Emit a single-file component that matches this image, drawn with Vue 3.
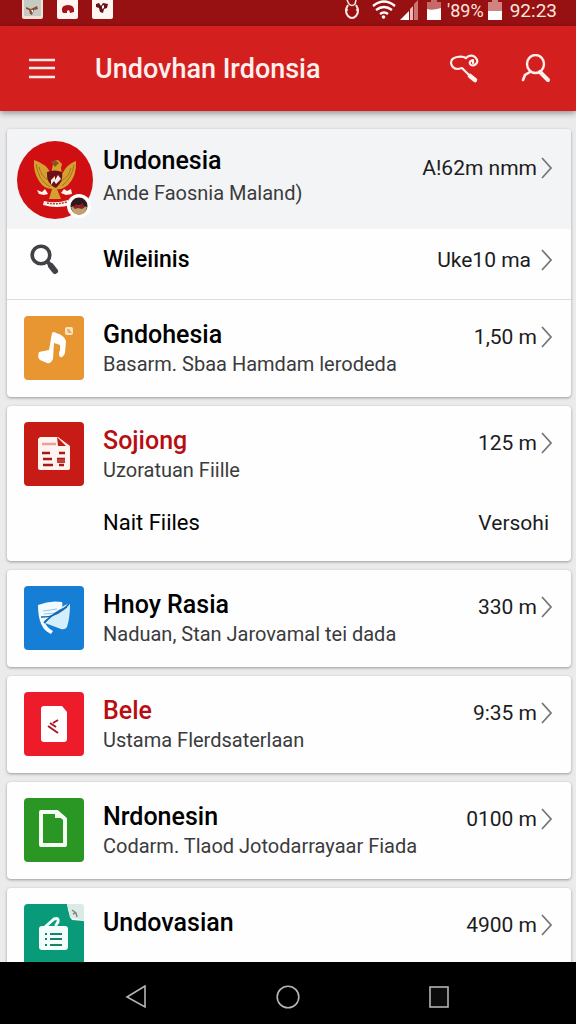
<script setup>
import { ref } from 'vue'

const selected = ref('')

// each group is one raised card in the list
const groups = [
  [
    { id: 'profile', kind: 'profile', title: 'Undonesia', sub: 'Ande Faosnia Maland)', meta: 'A!62m nmm' },
    { id: 'search', kind: 'search', title: 'Wileiinis', meta: 'Uke10 ma' },
    { id: 'music', kind: 'item', icon: 'music', title: 'Gndohesia', sub: 'Basarm. Sbaa Hamdam lerodeda', meta: '1,50 m' }
  ],
  [
    {
      id: 'news', kind: 'item', icon: 'news', title: 'Sojiong', sub: 'Uzoratuan Fiille', meta: '125 m', red: true,
      extra: { label: 'Nait Fiiles', value: 'Versohi' }
    }
  ],
  [{ id: 'shield', kind: 'item', icon: 'shield', title: 'Hnoy Rasia', sub: 'Naduan, Stan Jarovamal tei dada', meta: '330 m' }],
  [{ id: 'card', kind: 'item', icon: 'card', title: 'Bele', sub: 'Ustama Flerdsaterlaan', meta: '9:35 m', red: true }],
  [{ id: 'file', kind: 'item', icon: 'file', title: 'Nrdonesin', sub: 'Codarm. Tlaod Jotodarrayaar Fiada', meta: '0100 m' }],
  [{ id: 'notes', kind: 'item', icon: 'notes', title: 'Undovasian', sub: '', meta: '4900 m' }]
]

const select = (id) => {
  selected.value = id
}
</script>

<template>
  <div class="screen">
    <!-- STATUS BAR -->
    <div class="status">
      <div class="status-left">
        <svg class="tile" viewBox="0 0 21 19">
          <path d="M0 0h21v17q0 2-2 2H2q-2 0-2-2z" fill="#f3e2dc" />
          <path d="M2 0h17v16H2z" fill="#c5cbc2" />
          <path d="M4 7l5 2 6-3 1 3-4 1-2 5-2-1-1-4-3-1z" fill="#8d4a35" />
          <path d="M9 10l2 0 0 3z" fill="#fff" />
        </svg>
        <svg class="tile" viewBox="0 0 21 19">
          <path d="M0 0h21v17q0 2-2 2H2q-2 0-2-2z" fill="#fff6f4" />
          <path d="M5 11Q4 5 11 5q7 0 6 7l-4 1-1-3-2 1 0 2-4 0z" fill="#a5141b" />
        </svg>
        <svg class="tile" viewBox="0 0 21 19">
          <path d="M0 0h21v17q0 2-2 2H2q-2 0-2-2z" fill="#fff6f4" />
          <path d="M4 4l3-1 2 3 2-3 5 1-1 4-3 1-1 4-3-1-1-4-3-1z" fill="#66141a" />
          <path d="M10 6l2-1 0 3-2 1z" fill="#fff" />
        </svg>
      </div>
      <div class="status-right">
        <svg class="alarm" viewBox="0 0 16 20">
          <path d="M4 5Q0 11 4 16q4 4 8 0 4-5 0-11" fill="none" stroke="#ffe9e5" stroke-width="2" />
          <path d="M3 0l2 4q3 3 6 0l1-4M1 10h3M12 10h3" fill="none" stroke="#ffe9e5" stroke-width="1.500" />
        </svg>
        <svg class="wifi" viewBox="0 0 24 20">
          <path d="M1 6Q12-3 23 6M4 10q8-6 16 0M8 14q4-3 8 0" fill="none" stroke="#fff" stroke-width="2.400" />
          <circle cx="11.500" cy="17" r="1.800" fill="#fff" />
        </svg>
        <svg class="signal" viewBox="0 0 19 20">
          <path d="M0 20L9 11v9z" fill="#fff" />
          <path d="M10 9l3-3v14h-3z" fill="#e8b9b5" />
          <path d="M14 4l4-4v20h-4z" fill="#c97673" />
        </svg>
        <svg class="battery" viewBox="0 0 14 20">
          <path d="M0 2h4V0h6v2h4v8H0z" fill="#c46a68" />
          <path d="M0 9q5 2 14-1v12H0z" fill="#fff" />
        </svg>
        <span class="status-text percent">'89%</span>
        <svg class="battery" viewBox="0 0 14 20">
          <path d="M0 2h4V0h6v2h4v10H0z" fill="#d08481" />
          <path d="M0 11h14v9H0z" fill="#fff" />
        </svg>
        <span class="status-text clock">92:23</span>
      </div>
    </div>

    <!-- APP BAR -->
    <header class="appbar">
      <button class="icon-btn" aria-label="Menu">
        <svg width="26" height="22" viewBox="0 0 26 22">
          <path d="M0 2h26M0 10h26M0 19h26" stroke="#ffe9e6" stroke-width="2.600" />
        </svg>
      </button>
      <h1 class="app-title">Undovhan Irdonsia</h1>
      <button class="icon-btn" aria-label="Share">
        <svg width="30" height="30" viewBox="0 0 30 30" fill="none" stroke="#fff0ee" stroke-linecap="round" stroke-linejoin="round">
          <path d="M17 4q-3-2-9-1-6 1-6 6 1 6 7 6l4-1 8 8" stroke-width="2.200" />
          <path d="M17 4q4-4 9-1 4 4 1 7-4 3-6 0-1-3 3-4v3" stroke-width="2.200" />
          <path d="M21 22l5 4" stroke-width="4.500" />
        </svg>
      </button>
      <button class="icon-btn" aria-label="Search">
        <svg width="30" height="30" viewBox="0 0 30 30" fill="none" stroke="#fff0ee" stroke-linecap="round">
          <ellipse cx="14.500" cy="10" rx="8.500" ry="9" stroke-width="2.400" />
          <path d="M9 18l-5 3-2 5" stroke-width="2.600" />
          <path d="M19 18l8 8" stroke-width="4" />
        </svg>
      </button>
    </header>

    <!-- LIST -->
    <main class="list">
      <section v-for="(group, i) in groups" :key="i" class="card">
        <a
          v-for="row in group"
          :key="row.id"
          href="#"
          :class="['row', row.kind, { selected: selected === row.id }]"
          @click.prevent="select(row.id)"
        >
          <!-- profile emblem with its small badge -->
          <svg v-if="row.kind === 'profile'" class="avatar" viewBox="0 0 76 78">
            <ellipse cx="38" cy="39" rx="38" ry="39" fill="#d00f12" />
            <path d="M17 19q13 4 17 14l2-10 1-3 4-1 4 4-1 4 1 6q5-10 14-13 1 15-8 24-6 5-11 4l4 10H32l3-10q-8 0-13-8-6-9-5-21z" fill="#d5a030" />
            <path d="M19 23q2 16 14 23M22 26q2 10 11 14M57 24q-2 13-12 21M54 27q-2 9-10 13" fill="none" stroke="#a9711d" stroke-width="1" />
            <path d="M30 31q8-3 15 0 2 9-6 16-10-4-9-16z" fill="#6c1117" />
            <path d="M34 39l4-4v4l3-5 3 4-5 5-2-3-3 4z" fill="#f8eadf" />
            <path d="M34 21l4-2 4 3-4 4z" fill="#8a5420" />
            <path d="M20 49l5 2 3-3 3 5-4 1-5-1zM54 48l-4 2-3-2-3 4 5 2 6-1z" fill="#fff4ee" />
            <path d="M27 60q12 3 24-1l3 5q-14 4-28 0z" fill="#fff4ee" />
            <path d="M30 62q9 2 20-1" fill="none" stroke="#a8463e" stroke-width="1.500" stroke-dasharray="2 1" />
            <circle cx="62" cy="65" r="12" fill="#fff" />
            <circle cx="62" cy="65" r="8.500" fill="#30191a" />
            <path d="M54 66q8-3 16 0-1 7-8 8-7-1-8-8z" fill="#c4a06e" />
            <path d="M56 66l3-3 3 2 3-3 3 4-3 2-4-1-3 1z" fill="#8b2025" />
          </svg>

          <svg v-else-if="row.kind === 'search'" class="glass" viewBox="0 0 30 32">
            <circle cx="11" cy="11" r="8.800" fill="none" stroke="#404246" stroke-width="3.600" />
            <path d="M17 17l4 5" stroke="#404246" stroke-width="4" />
            <path d="M21 22l4 5" stroke="#404246" stroke-width="6" stroke-linecap="round" />
          </svg>

          <svg v-else class="icon" viewBox="0 0 60 64">
            <g v-if="row.icon === 'music'">
              <rect width="60" height="64" rx="4" fill="#e79631" />
              <path d="M28 17q2-2 4 0 8 2 10 8l-1 12q-2 5-5 4-2-3 0-7l0-5-6-2-1 16q-2 5-6 4l-7-3q-3-3-1-8l5-1 5-1z" fill="#fff" />
              <rect x="41" y="11" width="8" height="8" rx="2" fill="#fbe3bf" />
              <path d="M43 13h2l3 4h-4z" fill="#e8ad62" />
            </g>
            <g v-else-if="row.icon === 'news'">
              <rect width="60" height="64" rx="4" fill="#c71c16" />
              <path d="M16 15h18l12 9v22q0 2-3 2H17q-3 0-3-2V17z" fill="#fff3f0" />
              <path d="M33 15l1 9h8z" fill="#c71c16" />
              <path d="M18 22h14" stroke="#e2a39c" stroke-width="2.500" />
              <path d="M18 31h8M19 37h9M19 43h10M33 37h8M35 31h6M35 43h5" stroke="#a51a17" stroke-width="2.500" />
              <path d="M33 37h8v4h-8z" fill="#c2403a" />
            </g>
            <g v-else-if="row.icon === 'shield'">
              <rect width="60" height="64" rx="4" fill="#167fd5" />
              <path d="M14 19q12-5 24-3 2 5-3 9L20 35q3 7 9 10l-2 3Q14 43 14 19z" fill="#f2fbff" />
              <path d="M37 22q4-4 9-4 0 14-3 23-2 3-6 2L21 37z" fill="#d3effc" />
              <path d="M17 31q16 1 28-13" fill="none" stroke="#1768b2" stroke-width="1.500" />
              <path d="M19 25l14-2M20 28l12-1" stroke="#8fc7ec" stroke-width="1" />
              <path d="M20 37q9-10 23-16" fill="none" stroke="#1768b2" stroke-width="1.500" />
            </g>
            <g v-else-if="row.icon === 'card'">
              <rect width="60" height="64" rx="4" fill="#ee1b2a" />
              <path d="M20 14h18l5 6v27q0 3-3 3H20q-3 0-3-3V17q0-3 3-3z" fill="#fff" />
              <path d="M24 34l10 7M26 31l6 4M29 31l5-3" stroke="#a9192a" stroke-width="2" />
            </g>
            <g v-else-if="row.icon === 'file'">
              <rect width="60" height="64" rx="4" fill="#2a9725" />
              <path d="M17 14h16l8 7v26H17z" fill="none" stroke="#f4fff2" stroke-width="4" stroke-linejoin="round" />
              <path d="M31 12v8h11l-8-7z" fill="#f4fff2" />
            </g>
            <g v-else>
              <path d="M4 0h39q2 12 5 16l12 1v47H0V4q0-4 4-4z" fill="#089a79" />
              <path d="M43 0h14q3 0 3 3v14Q53 14 46 14 45 6 43 0z" fill="#dceae4" />
              <path d="M48 6l4 3 1 4M49 10l2-1" fill="none" stroke="#7c8b85" stroke-width="1.500" />
              <rect x="15" y="22" width="29" height="24" rx="3" fill="#f3fffb" />
              <path d="M21 23l9-8q5-2 4 3l-2 3" fill="none" stroke="#f3fffb" stroke-width="3" stroke-linecap="round" />
              <path d="M26 30h12M26 35h12M26 41h12" stroke="#178267" stroke-width="2" />
              <path d="M21 30h2M21 35h2M21 41h2" stroke="#178267" stroke-width="2" />
            </g>
          </svg>

          <span class="text">
            <span :class="['title', { red: row.red }]">{{ row.title }}</span>
            <span v-if="row.sub" class="sub">{{ row.sub }}</span>
          </span>

          <span class="meta">
            {{ row.meta }}
            <svg class="chevron" viewBox="0 0 12 22">
              <path d="M1 1l9 10-9 10" fill="none" stroke="#777" stroke-width="1.800" />
            </svg>
          </span>

          <template v-if="row.extra">
            <span class="extra-label">{{ row.extra.label }}</span>
            <span class="extra-value">{{ row.extra.value }}</span>
          </template>
        </a>
      </section>
    </main>

    <!-- SYSTEM NAVIGATION -->
    <nav class="navbar">
      <button class="nav-btn" aria-label="Back">
        <svg width="24" height="24" viewBox="0 0 24 24">
          <path d="M20 1v21L2 12z" fill="none" stroke="#b5b5b5" stroke-width="1.600" />
        </svg>
      </button>
      <button class="nav-btn" aria-label="Home">
        <svg width="24" height="24" viewBox="0 0 24 24">
          <circle cx="12" cy="12" r="10.800" fill="none" stroke="#b5b5b5" stroke-width="1.600" />
        </svg>
      </button>
      <button class="nav-btn" aria-label="Recent apps">
        <svg width="24" height="24" viewBox="0 0 24 24">
          <rect x="3" y="2" width="18" height="20" fill="#0c0c0c" stroke="#b5b5b5" stroke-width="1.600" />
        </svg>
      </button>
    </nav>
  </div>
</template>

<style>
body {
  margin: 0;
  background: #ebebec;
}
</style>

<style scoped>
.screen {
  display: flex;
  flex-direction: column;
  height: 100vh;
  background: #ebebec;
  color: #000;
  font-family: Roboto, "Liberation Sans", sans-serif;
}

button {
  display: flex;
  align-items: center;
  justify-content: center;
  padding: 0;
  border: 0;
  background: none;
  cursor: pointer;
}

svg {
  display: block;
}

/* STATUS BAR */
.status {
  display: flex;
  flex: none;
  justify-content: space-between;
  height: 26px;
  padding: 0 19px 0 22px;
  background: #971112;
}

.status-left {
  display: flex;
  gap: 14px;
}

.tile {
  width: 21px;
  height: 19px;
}

.status-right {
  display: flex;
  align-items: flex-start;
}

.alarm {
  width: 16px;
  height: 20px;
  margin-right: 12px;
}

.wifi {
  width: 24px;
  height: 20px;
  margin-right: 4px;
}

.signal {
  width: 19px;
  height: 20px;
  margin-right: 8px;
}

.battery {
  width: 14px;
  height: 20px;
}

.status-text {
  color: #ffe3df;
  font-size: 19px;
  line-height: 22px;
  white-space: nowrap;
}

.percent {
  margin: 0 4px 0 6px;
  font-size: 18px;
}

.clock {
  margin-left: 8px;
}

/* APP BAR */
.appbar {
  position: relative;
  z-index: 1;
  display: flex;
  flex: none;
  align-items: center;
  height: 85px;
  padding: 0 16px 0 18px;
  background: #d3201f;
  box-shadow: 0 2px 6px rgba(0, 0, 0, 0.4);
}

.icon-btn {
  width: 48px;
  height: 48px;
}

.icon-btn + .icon-btn {
  margin-left: 24px;
}

.app-title {
  flex: 1;
  margin: 0 0 0 29px;
  color: #ffefed;
  font-size: 27px;
  font-weight: 500;
  line-height: 36px;
  white-space: nowrap;
}

/* LIST */
.list {
  display: flex;
  flex: 1;
  flex-direction: column;
  gap: 9px;
  min-height: 0;
  padding: 18px 5px 0 7px;
  overflow-y: auto;
  scrollbar-width: none;
}

.card {
  flex: none;
  overflow: hidden;
  border-radius: 4px;
  background: #fefefe;
  box-shadow: 0 1px 3px rgba(0, 0, 0, 0.35);
}

.row {
  display: grid;
  grid-template-columns: 60px 1fr auto;
  column-gap: 19px;
  align-items: start;
  padding: 16px 18px 17px 17px;
  color: inherit;
  text-decoration: none;
}

.row + .row {
  border-top: 1px solid #dcdcdd;
}

.row.profile {
  grid-template-columns: 76px 1fr auto;
  column-gap: 10px;
  padding: 12px 18px 10px 10px;
  background: #f3f4f5;
}

.row.search {
  align-items: center;
  padding: 15px 18px 23px 17px;
  border-top: 0;
}

.row.item.selected {
  background: #f3f4f5;
}

.avatar {
  width: 76px;
  height: 78px;
}

.glass {
  width: 30px;
  height: 32px;
  margin-left: 6px;
}

.icon {
  width: 60px;
  height: 64px;
}

.text {
  display: flex;
  flex-direction: column;
  min-width: 0;
  padding-top: 4px;
  white-space: nowrap;
}

.title {
  font-size: 25px;
  font-weight: 500;
  line-height: 30px;
}

.title.red {
  color: #b90d12;
}

.sub {
  color: #3b3b3d;
  font-size: 20px;
  line-height: 28px;
}

.meta {
  display: flex;
  gap: 4px;
  align-items: center;
  padding-top: 6px;
  color: #1c1c1e;
  font-size: 21px;
  line-height: 30px;
  white-space: nowrap;
}

.chevron {
  width: 12px;
  height: 22px;
}

.profile .title,
.profile .sub {
  line-height: 32px;
}

.profile .meta {
  padding-top: 12px;
}

.search .text,
.search .meta {
  padding-top: 0;
}

.search .title {
  font-size: 23px;
}

.search .meta {
  gap: 10px;
}

.extra-label,
.extra-value {
  padding: 22px 0 6px;
  font-size: 22px;
  line-height: 30px;
}

.extra-value {
  padding-right: 4px;
  color: #1c1c1e;
  font-size: 21px;
  text-align: right;
}

.extra-label {
  grid-column: 2;
}

/* SYSTEM NAVIGATION */
.navbar {
  display: grid;
  flex: none;
  grid-template-columns: repeat(3, 1fr);
  justify-items: center;
  height: 62px;
  padding: 0 61px;
  background: #000;
}

.nav-btn {
  width: 48px;
  height: 100%;
  padding-top: 8px;
}
</style>
